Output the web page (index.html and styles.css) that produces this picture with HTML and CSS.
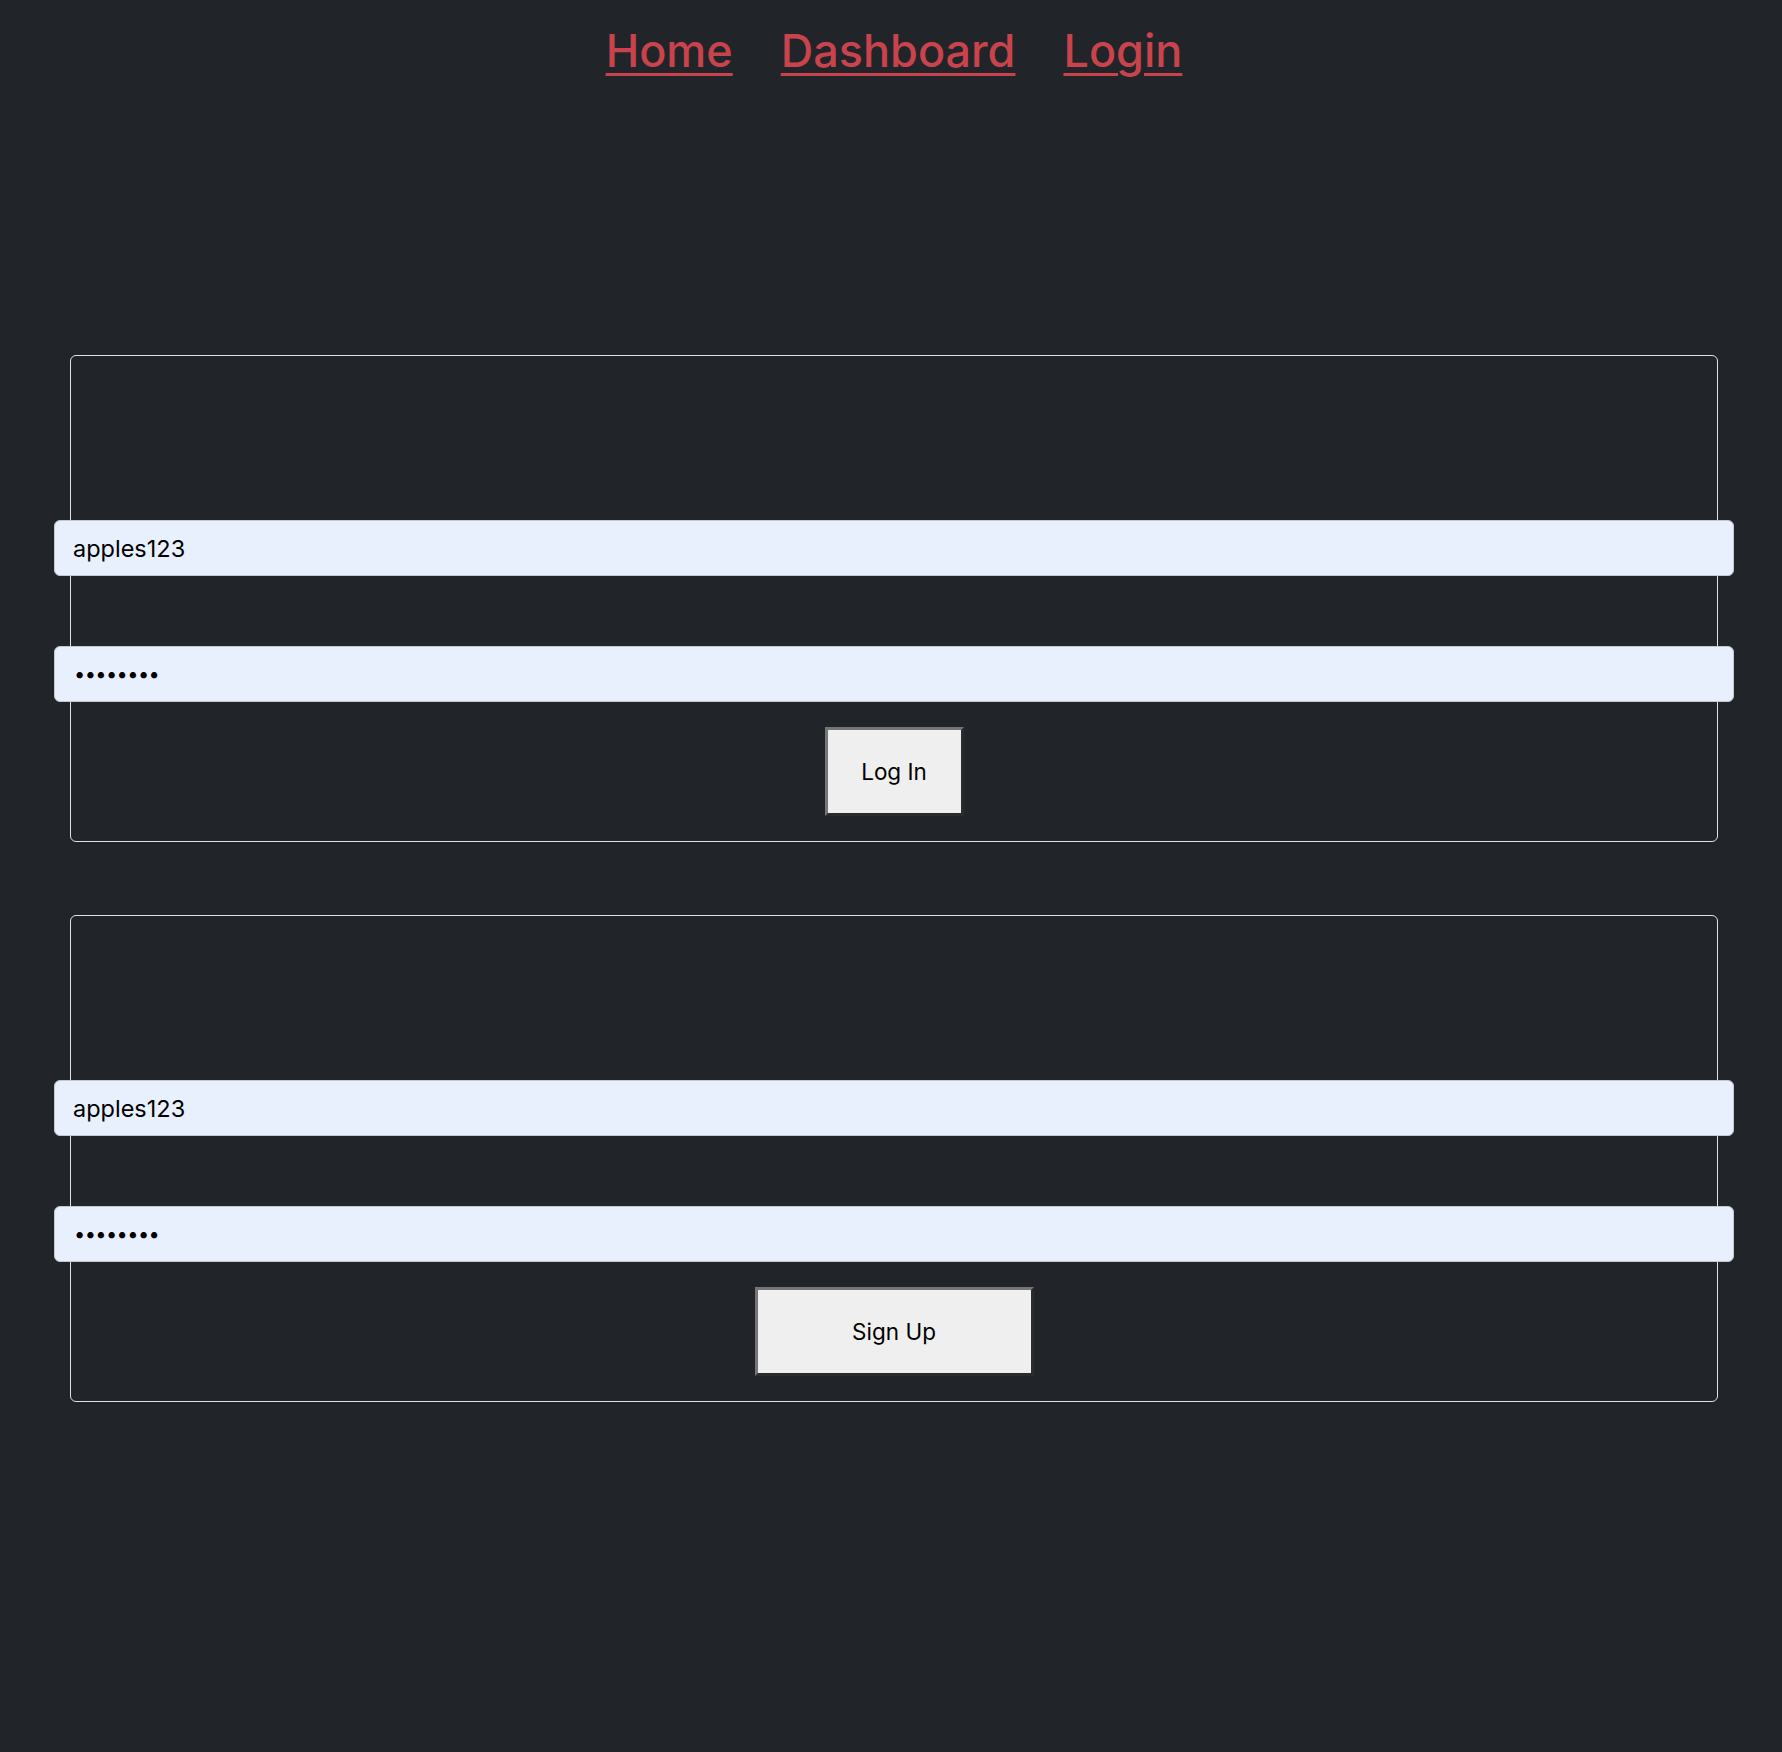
FILE: index.html
```html
<!DOCTYPE html>
<html lang="en">
<head>
<meta charset="utf-8">
<title>Login</title>
<link rel="stylesheet" href="styles.css">
</head>
<body>
  <nav class="topnav">
    <a class="navlink" href="#">Home</a>
    <a class="navlink" href="#">Dashboard</a>
    <a class="navlink" href="#">Login</a>
  </nav>
  <main class="forms">
    <form class="card">
      <input class="field" type="text" value="apples123">
      <input class="field field-pass" type="password" value="apples12">
      <button class="btn btn-login" type="button">Log In</button>
    </form>
    <form class="card">
      <input class="field" type="text" value="apples123">
      <input class="field field-pass" type="password" value="apples12">
      <button class="btn btn-signup" type="button">Sign Up</button>
    </form>
  </main>
</body>
</html>
```

FILE: styles.css
```css
html, body {
  margin: 0;
  background: #212529;
}
body {
  padding-left: 6px;
  font-family: Inter, "Noto Sans", sans-serif;
  min-height: 1752px;
  box-sizing: border-box;
}
.topnav {
  display: flex;
  justify-content: center;
  gap: 48px;
  padding-top: 24px;
}
.navlink {
  font-size: 45px;
  font-weight: 500;
  line-height: 53px;
  color: #c9434c;
  text-decoration: underline;
  text-decoration-thickness: 3px;
  text-underline-offset: 6px;
}
.forms {
  display: flex;
  flex-direction: column;
  gap: 73px;
  padding: 278px 64px 0 64px;
}
.card {
  display: flex;
  flex-direction: column;
  align-items: center;
  margin: 0;
  padding: 164px 0 25px;
  border: 1px solid #dfe2e6;
  border-radius: 6px;
}
.field {
  box-sizing: border-box;
  flex: none;
  width: calc(100% + 34px);
  height: 56px;
  margin: 0;
  padding: 0 16px 0 18px;
  border: 1px solid #c4c8ce;
  border-radius: 6px;
  background: #e8f0fe;
  color: #000;
  font-family: Inter, "Noto Sans", sans-serif;
  font-size: 23.5px;
  outline: none;
}
.field-pass {
  margin-top: 70px;
  padding-left: 19px;
  font-size: 20px;
  letter-spacing: -0.6px;
}
.btn {
  box-sizing: border-box;
  margin-top: 25px;
  height: 89px;
  padding: 0;
  background: #efefef;
  color: #000;
  font-family: Inter, "Noto Sans", sans-serif;
  font-size: 22.5px;
  border-width: 3px;
  border-style: solid;
  border-color: #767676 #2a2b2d #2a2b2d #767676;
}
.btn-login {
  width: 139px;
}
.btn-signup {
  width: 279px;
}
```
